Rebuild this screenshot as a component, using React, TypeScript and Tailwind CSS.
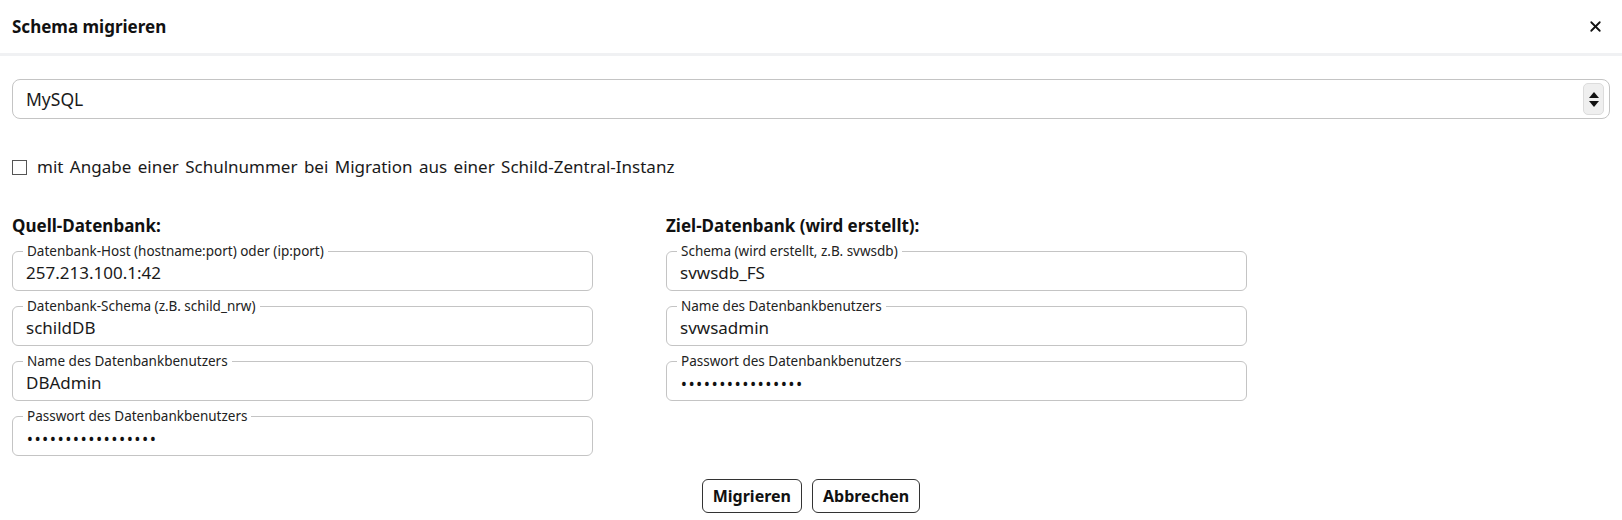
import { X } from 'lucide-react';

type Field = { label: string; value: string; password?: boolean };

const quelle: Field[] = [
  { label: 'Datenbank-Host (hostname:port) oder (ip:port)', value: '257.213.100.1:42' },
  { label: 'Datenbank-Schema (z.B. schild_nrw)', value: 'schildDB' },
  { label: 'Name des Datenbankbenutzers', value: 'DBAdmin' },
  { label: 'Passwort des Datenbankbenutzers', value: '•••••••••••••••••', password: true },
];

const ziel: Field[] = [
  { label: 'Schema (wird erstellt, z.B. svwsdb)', value: 'svwsdb_FS' },
  { label: 'Name des Datenbankbenutzers', value: 'svwsadmin' },
  { label: 'Passwort des Datenbankbenutzers', value: '••••••••••••••••', password: true },
];

function FloatField({ label, value, password }: Field) {
  return (
    <div className="relative flex h-[40px] items-end rounded-[6px] border border-[#c4c4c4] pb-[7px] pl-[13px] pr-3">
      <span className="absolute left-[10px] top-[-9px] bg-white px-[4px] text-[13.5px] leading-[16px] text-[#222]">
        {label}
      </span>
      {password ? (
        <div className="flex text-[14px] font-semibold leading-[18px] text-[#111]">
          {value.split('').map((c, i) => (
            <span key={i} className="inline-block w-[7.7px] text-center">
              {c}
            </span>
          ))}
        </div>
      ) : (
        <div className="text-[17px] leading-[20px] text-[#1a1a1a]">{value}</div>
      )}
    </div>
  );
}

function Column({ title, fields }: { title: string; fields: Field[] }) {
  return (
    <div className="w-[581px]">
      <h3 className="mb-[13px] text-[17px] font-bold leading-[24px] text-[#111]">{title}</h3>
      <div className="flex flex-col gap-[15px]">
        {fields.map((f) => (
          <FloatField key={f.label} {...f} />
        ))}
      </div>
    </div>
  );
}

export default function App() {
  return (
    <div
      className="h-[520px] w-[1622px] overflow-hidden bg-white text-[#1a1a1a]"
      style={{ fontFamily: '"Noto Sans", "Open Sans", sans-serif' }}
    >
      <div className="flex h-[56px] items-center justify-between border-b-[3px] border-[#f0f1f3] pl-[12px] pr-[18px]">
        <h2 className="text-[17px] font-bold text-[#111]">Schema migrieren</h2>
        <X size={17} strokeWidth={2.5} className="text-[#111]" />
      </div>

      <div className="px-[12px] pt-[23px]">
        <div className="flex h-[40px] items-center justify-between rounded-[8px] border border-[#c4c4c4] pl-[13px] pr-[5px]">
          <span className="text-[17.5px] text-[#1a1a1a]">MySQL</span>
          <div className="flex h-[32px] w-[21px] flex-col items-center justify-center gap-[3px] rounded-[5px] border border-[#dcdcdc] bg-[#efefef]">
            <svg width="10" height="6" viewBox="0 0 10 6"><path d="M0 6 L5 0 L10 6 Z" fill="#111" /></svg>
            <svg width="10" height="6" viewBox="0 0 10 6"><path d="M0 0 L5 6 L10 0 Z" fill="#111" /></svg>
          </div>
        </div>

        <label className="mt-[36px] flex h-[24px] items-center gap-[10px]">
          <span className="h-[15px] w-[15px] border border-[#555] bg-white" />
          <span className="text-[17px] text-[#1a1a1a] [word-spacing:2px]">
            mit Angabe einer Schulnummer bei Migration aus einer Schild-Zentral-Instanz
          </span>
        </label>

        <div className="mt-[35px] flex gap-[73px]">
          <Column title="Quell-Datenbank:" fields={quelle} />
          <Column title="Ziel-Datenbank (wird erstellt):" fields={ziel} />
        </div>

        <div className="mt-[23px] flex justify-center gap-[10px]">
          <button className="h-[34px] rounded-[6px] border border-[#333] px-[10px] text-[16px] font-bold text-[#111]">
            Migrieren
          </button>
          <button className="h-[34px] rounded-[6px] border border-[#333] px-[10px] text-[16px] font-bold text-[#111]">
            Abbrechen
          </button>
        </div>
      </div>
    </div>
  );
}
